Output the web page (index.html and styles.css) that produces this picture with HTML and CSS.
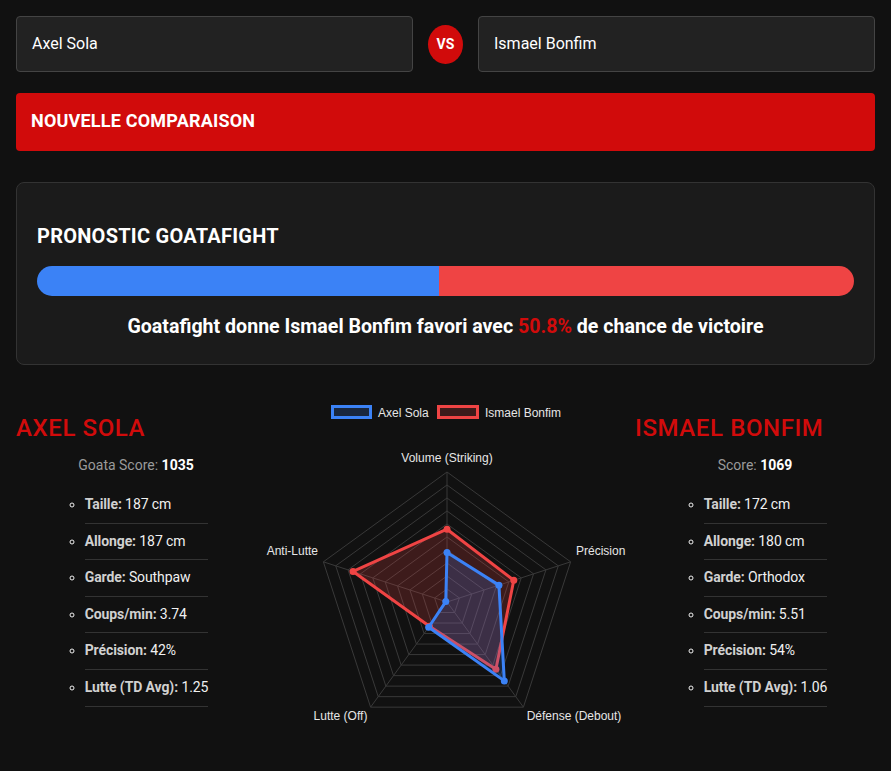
FILE: index.html
```html
<!DOCTYPE html>
<html lang="fr">
<head>
  <meta charset="UTF-8">
  <title>Goatafight - Comparaison</title>
  <link rel="stylesheet" href="styles.css">
</head>
<body>
  <div class="container">
    <div class="fighter-select">
      <div class="fighter-input">Axel Sola</div>
      <div class="vs">VS</div>
      <div class="fighter-input">Ismael Bonfim</div>
    </div>

    <button class="new-compare">Nouvelle comparaison</button>

    <div class="prediction">
      <h2>Pronostic Goatafight</h2>
      <div class="odds-bar">
        <div class="odds-blue" style="width: 49.2%;"></div>
        <div class="odds-red"></div>
      </div>
      <p class="verdict">Goatafight donne Ismael Bonfim favori avec <span class="pct">50.8%</span> de chance de victoire</p>
    </div>

    <div class="compare">
      <div class="fighter">
        <h2 class="fighter-name">Axel Sola</h2>
        <div class="score">Goata Score: <strong>1035</strong></div>
        <ul class="stats">
          <li><b>Taille:</b> 187 cm</li>
          <li><b>Allonge:</b> 187 cm</li>
          <li><b>Garde:</b> Southpaw</li>
          <li><b>Coups/min:</b> 3.74</li>
          <li><b>Précision:</b> 42%</li>
          <li><b>Lutte (TD Avg):</b> 1.25</li>
        </ul>
      </div>

      <div class="radar">
        <svg width="379" height="335" viewBox="0 0 379 335">
          <!-- legend -->
          <rect x="76.5" y="11.5" width="38" height="11" fill="rgba(59,130,246,0.2)" stroke="#3b82f6" stroke-width="3"/>
          <text x="122" y="21.5" class="legend-txt">Axel Sola</text>
          <rect x="182.5" y="11.5" width="39" height="11" fill="rgba(239,68,68,0.2)" stroke="#ef4444" stroke-width="3"/>
          <text x="229" y="21.5" class="legend-txt">Ismael Bonfim</text>

          <!-- grid rings, step 10 -->
          <g fill="none" stroke="#393939" stroke-width="1">
            <polygon points="191,194 203.36,202.98 198.64,217.52 183.36,217.52 178.64,202.98"/>
            <polygon points="191,181 215.73,198.97 206.28,228.03 175.72,228.03 166.27,198.97"/>
            <polygon points="191,168 228.09,194.95 213.92,238.55 168.08,238.55 153.91,194.95"/>
            <polygon points="191,155 240.46,190.93 221.57,249.07 160.43,249.07 141.54,190.93"/>
            <polygon points="191,142 252.82,186.91 229.21,259.59 152.79,259.59 129.18,186.91"/>
            <polygon points="191,129 265.19,182.9 236.85,270.1 145.15,270.1 116.81,182.9"/>
            <polygon points="191,116 277.55,178.88 244.49,280.62 137.51,280.62 104.45,178.88"/>
            <polygon points="191,103 289.91,174.86 252.13,291.14 129.87,291.14 92.09,174.86"/>
            <polygon points="191,90 302.28,170.85 259.77,301.65 122.23,301.65 79.72,170.85"/>
            <polygon points="191,77 314.64,166.83 267.41,312.17 114.59,312.17 67.36,166.83"/>
            <line x1="191" y1="207" x2="191" y2="77"/>
            <line x1="191" y1="207" x2="314.64" y2="166.83"/>
            <line x1="191" y1="207" x2="267.41" y2="312.17"/>
            <line x1="191" y1="207" x2="114.59" y2="312.17"/>
            <line x1="191" y1="207" x2="67.36" y2="166.83"/>
          </g>

          <!-- axis labels -->
          <text x="191" y="67" text-anchor="middle" class="axis-txt">Volume (Striking)</text>
          <text x="320" y="160" class="axis-txt">Précision</text>
          <text x="318" y="325" text-anchor="middle" class="axis-txt">Défense (Debout)</text>
          <text x="84.5" y="325" text-anchor="middle" class="axis-txt">Lutte (Off)</text>
          <text x="62" y="160" text-anchor="end" class="axis-txt">Anti-Lutte</text>

          <!-- Ismael Bonfim -->
          <polygon points="191,134.2 257.77,185.31 239.9,274.31 173.42,231.19 97.03,176.47" fill="rgba(239,68,68,0.2)" stroke="#ef4444" stroke-width="3" stroke-linejoin="round"/>
          <g fill="#ef4444">
            <circle cx="191" cy="134.2" r="3.5"/>
            <circle cx="257.77" cy="185.31" r="3.5"/>
            <circle cx="239.9" cy="274.31" r="3.5"/>
            <circle cx="173.42" cy="231.19" r="3.5"/>
            <circle cx="97.03" cy="176.47" r="3.5"/>
          </g>

          <!-- Axel Sola -->
          <polygon points="191,157.6 242.93,190.13 248.31,285.88 172.66,232.24 189.76,206.6" fill="rgba(59,130,246,0.2)" stroke="#3b82f6" stroke-width="3" stroke-linejoin="round"/>
          <g fill="#3b82f6">
            <circle cx="191" cy="157.6" r="3.5"/>
            <circle cx="242.93" cy="190.13" r="3.5"/>
            <circle cx="248.31" cy="285.88" r="3.5"/>
            <circle cx="172.66" cy="232.24" r="3.5"/>
            <circle cx="189.76" cy="206.6" r="3.5"/>
          </g>
        </svg>
      </div>

      <div class="fighter">
        <h2 class="fighter-name">Ismael Bonfim</h2>
        <div class="score">Score: <strong>1069</strong></div>
        <ul class="stats">
          <li><b>Taille:</b> 172 cm</li>
          <li><b>Allonge:</b> 180 cm</li>
          <li><b>Garde:</b> Orthodox</li>
          <li><b>Coups/min:</b> 5.51</li>
          <li><b>Précision:</b> 54%</li>
          <li><b>Lutte (TD Avg):</b> 1.06</li>
        </ul>
      </div>
    </div>
  </div>
</body>
</html>
```

FILE: styles.css
```css
:root {
  --bg: #111;
  --card: #1b1b1b;
  --field: #222;
  --red: #d10b0b;
  --blue: #3b82f6;
  --text: #f2f2f2;
}
body {
  font-family: Roboto, "Noto Sans", Arial, sans-serif;
  background-color: var(--bg);
  color: var(--text);
  margin: 0;
  padding: 0;
}
.container { padding: 16px; }

.fighter-select {
  display: flex;
  align-items: center;
  gap: 15px;
}
.fighter-input {
  flex: 1;
  height: 54px;
  line-height: 54px;
  padding: 0 15px;
  background: var(--field);
  border: 1px solid #444;
  border-radius: 4px;
  font-size: 16px;
  color: #fff;
}
.vs {
  width: 35px;
  height: 39px;
  line-height: 39px;
  border-radius: 50%;
  background: var(--red);
  color: #fff;
  font-weight: 700;
  font-size: 14px;
  text-align: center;
}

.new-compare {
  display: block;
  width: 100%;
  height: 58px;
  margin-top: 21px;
  padding: 0 15px 4px;
  background: var(--red);
  border: none;
  border-radius: 4px;
  color: #fff;
  font-family: inherit;
  font-size: 18px;
  font-weight: 700;
  letter-spacing: 0.2px;
  text-align: left;
  text-transform: uppercase;
}

.prediction {
  margin-top: 31px;
  padding: 20px;
  background: var(--card);
  border: 1px solid #333;
  border-radius: 8px;
}
.prediction h2 {
  margin: 21px 0 18px;
  font-size: 20px;
  line-height: 24px;
  font-weight: 700;
  letter-spacing: 0.25px;
  text-transform: uppercase;
  color: #fff;
}
.odds-bar {
  display: flex;
  height: 30px;
  border-radius: 15px;
  overflow: hidden;
}
.odds-blue { background: var(--blue); }
.odds-red { flex: 1; background: #ef4444; }
.verdict {
  margin: 19px 0 5px;
  text-align: center;
  font-size: 19.6px;
  line-height: 24px;
  font-weight: 700;
  color: #fff;
}
.pct { color: var(--red); }

.compare {
  display: flex;
  margin-top: 30px;
}
.fighter {
  width: 240px;
  padding-top: 18px;
  text-align: center;
}
.fighter-name {
  margin: 0 0 12px;
  text-align: left;
  font-size: 24px;
  line-height: 30px;
  font-weight: 500;
  letter-spacing: 0.6px;
  text-transform: uppercase;
  color: var(--red);
}
.score {
  font-size: 14px;
  line-height: 20px;
  color: #9a9a9a;
}
.score strong { color: #fff; }
.stats {
  display: inline-block;
  margin: 12px 0 0;
  padding-left: 21px;
  text-align: left;
  list-style: circle;
  font-size: 14px;
  letter-spacing: -0.1px;
}
.stats li {
  padding: 8px 0;
  line-height: 19.6px;
  border-bottom: 1px solid #333;
  color: #f0f0f0;
}
.stats b { color: #d0d0d0; }

.radar {
  flex: 1;
  display: flex;
  justify-content: center;
}
.radar svg { display: block; }
.legend-txt, .axis-txt {
  font-family: "Liberation Sans", Arial, sans-serif;
  font-size: 12px;
  fill: #e6e6e6;
}
```
